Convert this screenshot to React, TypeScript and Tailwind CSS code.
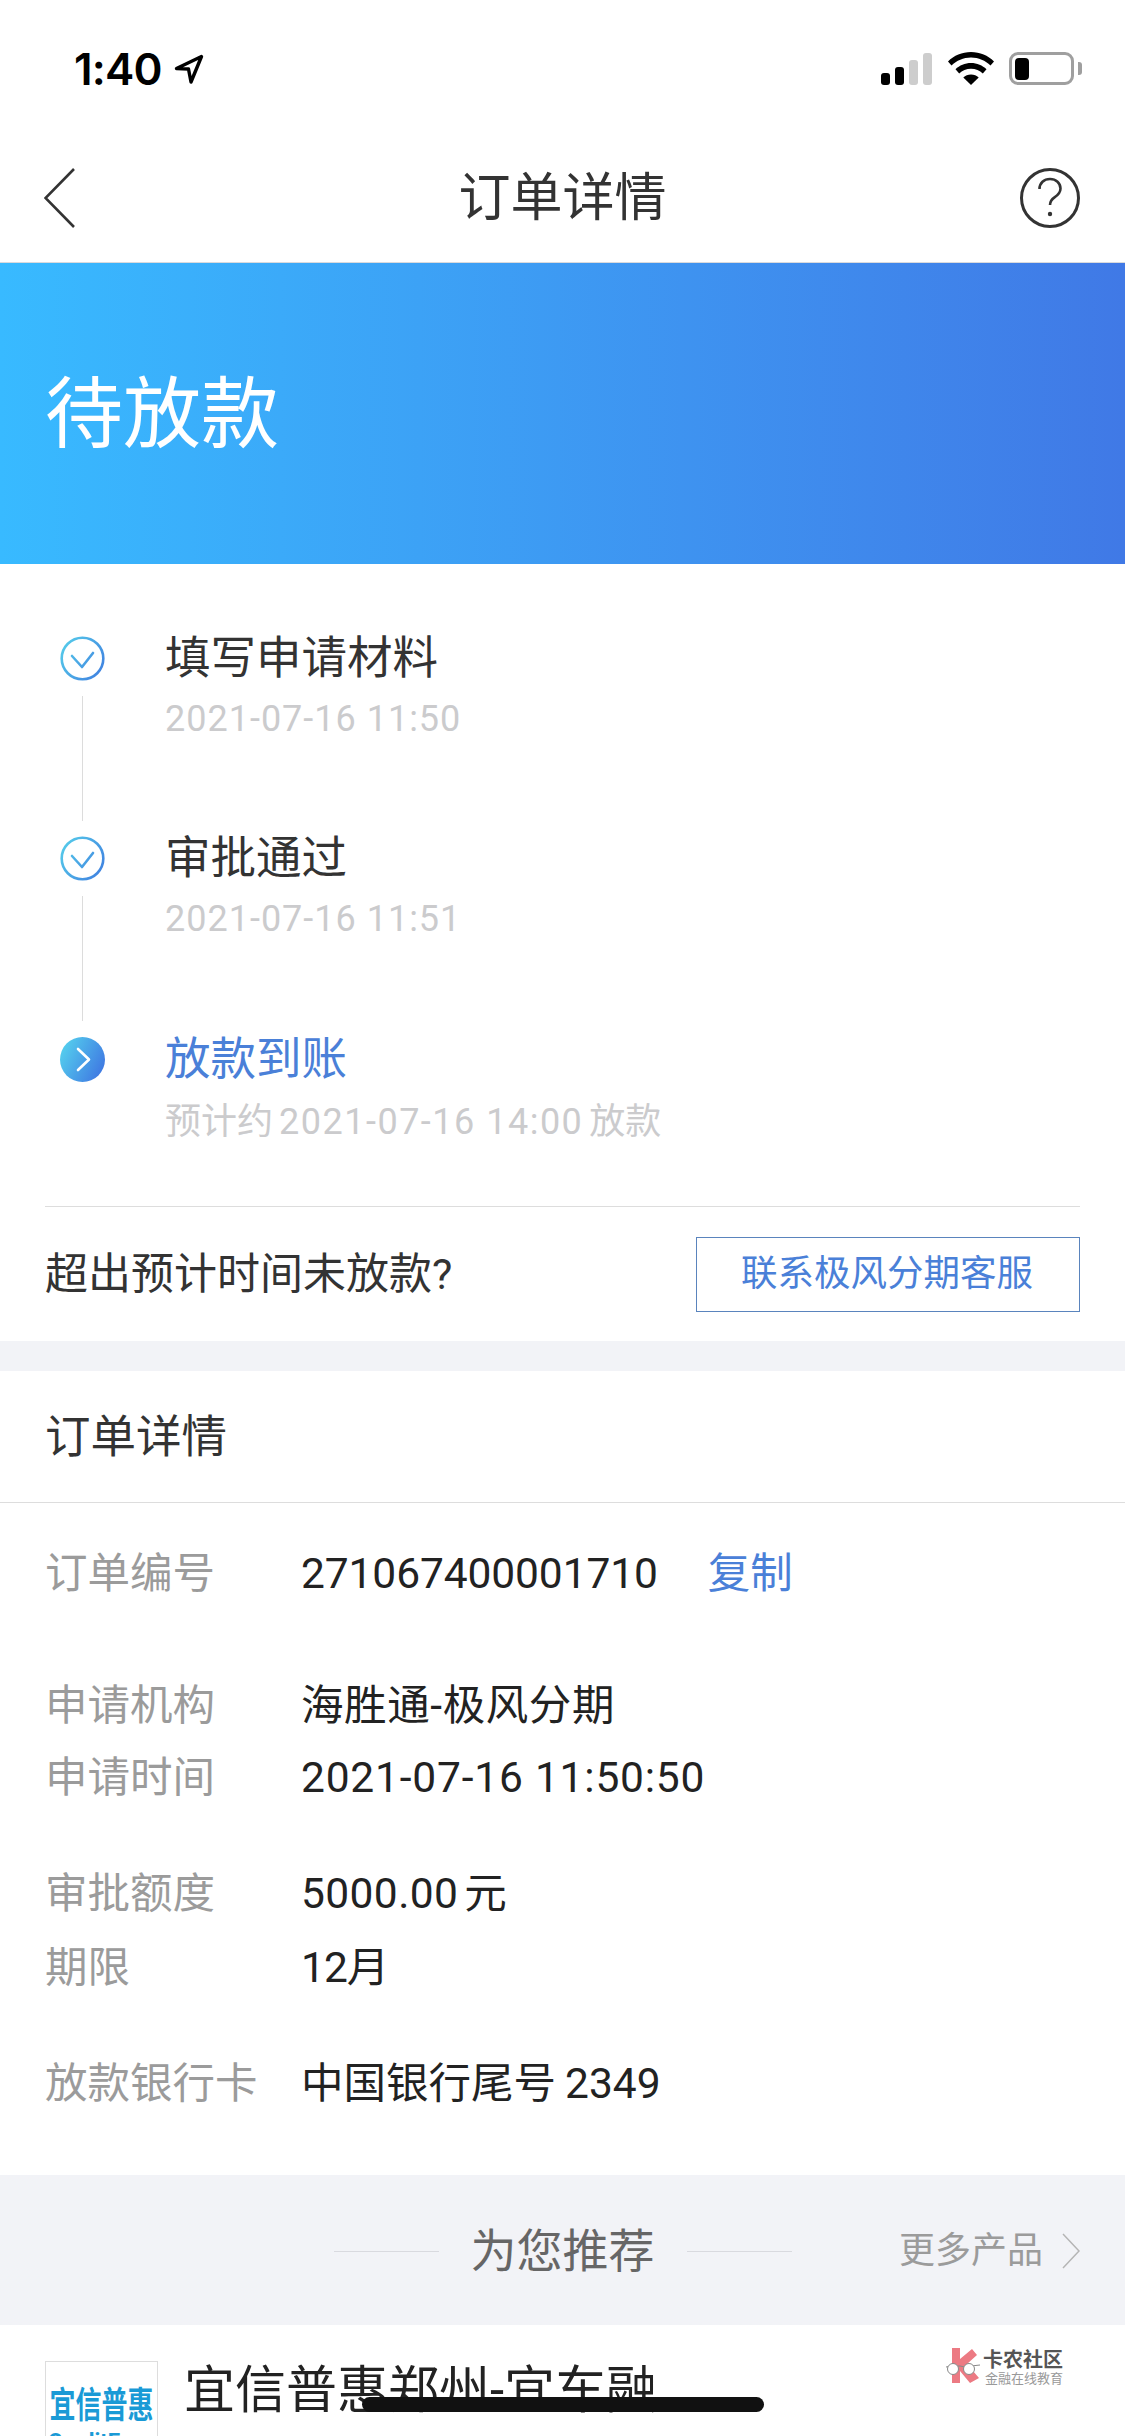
const FONT = 'font-["Roboto","Noto_Sans_CJK_SC",sans-serif]';

function CheckIcon({ id }: { id: string }) {
  return (
    <svg width="45" height="45" viewBox="0 0 45 45" fill="none">
      <defs>
        <linearGradient id={id} gradientUnits="userSpaceOnUse" x1="0" y1="8" x2="45" y2="36">
          <stop offset="0" stopColor="#56cdea" />
          <stop offset="1" stopColor="#3f80e0" />
        </linearGradient>
      </defs>
      <circle cx="22.5" cy="22.5" r="20.8" stroke={`url(#${id})`} strokeWidth="2.6" />
      <path d="M12 20l10 11 11-14" stroke={`url(#${id})`} strokeWidth="2.6" strokeLinecap="round" strokeLinejoin="round" />
    </svg>
  );
}

function ArrowIcon() {
  return (
    <svg width="45" height="45" viewBox="0 0 45 45" fill="none">
      <defs>
        <linearGradient id="arr" x1="0" y1="0.2" x2="1" y2="0.7">
          <stop offset="0" stopColor="#55d2ee" />
          <stop offset="1" stopColor="#3f78e2" />
        </linearGradient>
      </defs>
      <circle cx="22.5" cy="22.5" r="22.5" fill="url(#arr)" />
      <path d="M18 12l11 10.5L18 33" stroke="#fff" strokeWidth="2.6" strokeLinecap="round" strokeLinejoin="round" />
    </svg>
  );
}

function StatusBar() {
  return (
    <div className="flex h-[130px] items-start justify-between pt-[52px] pl-[74px] pr-[51px]">
      <div className="flex items-center gap-[12px]">
        <span className="font-['Inter',sans-serif] text-[44px] leading-[34px] font-semibold tracking-[-0.8px] text-black">1:40</span>
        <svg width="30" height="31" viewBox="0 0 30 31" fill="none">
          <path d="M27.500 2.500L2.500 14.500l12 .5L17 28z" stroke="#000" strokeWidth="3.400" strokeLinejoin="round" />
        </svg>
      </div>
      <div className="flex items-center">
        <svg width="52" height="33" viewBox="0 0 52 33" className="mr-[15px]">
          <rect x="0" y="21" width="9" height="12" rx="3" fill="#000" />
          <rect x="14" y="15" width="9" height="18" rx="3" fill="#000" />
          <rect x="28" y="8" width="9" height="25" rx="3" fill="#cdcdcd" />
          <rect x="42" y="1" width="9" height="32" rx="3" fill="#cdcdcd" />
        </svg>
        <svg width="46" height="33" viewBox="0 0 46 33" className="mr-[15px]">
          <path d="M23 0C14 0 6 3.500 0 9.500l3.500 4C8.500 8.500 15.500 5.500 23 5.500s14.500 3 19.500 8l3.500-4C40 3.500 32 0 23 0z" fill="#000" />
          <path d="M23 11c-6 0-11.500 2.400-15.500 6.200l3.700 4.200C14.200 18.500 18.500 16.800 23 16.800s8.800 1.700 11.800 4.600l3.700-4.200C34.500 13.400 29 11 23 11z" fill="#000" />
          <path d="M23 22.500c-3 0-5.700 1.100-7.700 3L23 33l7.700-7.500c-2-1.900-4.700-3-7.700-3z" fill="#000" />
        </svg>
        <div className="relative flex h-[33px] w-[65px] items-center rounded-[9px] border-[3px] border-[#9f9f9f] pl-[3px]">
          <div className="h-[22px] w-[14px] rounded-[4px] bg-black" />
          <div className="absolute top-[7px] right-[-11px] h-[13px] w-[4px] rounded-r-[3px] bg-[#9f9f9f]" />
        </div>
      </div>
    </div>
  );
}

function NavBar() {
  return (
    <div className="relative flex h-[133px] items-center justify-center border-b border-[#d9dadd] pt-[6px]">
      <svg width="31" height="60" viewBox="0 0 31 60" fill="none" className="absolute top-[38px] left-[44px]">
        <path d="M30 1L1.500 30 30 59" stroke="#333" strokeWidth="2.600" />
      </svg>
      <span className="text-[52px] leading-[60px] text-[#333]">订单详情</span>
      <div className="absolute top-[38px] right-[45px] flex h-[60px] w-[60px] items-center justify-center rounded-full border-[3px] border-[#333]">
        <svg width="26" height="42" viewBox="0 0 26 42" fill="none">
          <path d="M2.500 12C2.500 6 7 2 13 2s10.500 4 10.500 9.500c0 4.500-3 6.800-6 8.800-3 2-4.500 3.700-4.500 7.700" stroke="#333" strokeWidth="2.600" />
          <circle cx="13" cy="37" r="2.200" fill="#333" />
        </svg>
      </div>
    </div>
  );
}

function Step({
  id,
  title,
  date,
  active,
  last,
  tall,
}: {
  id: string;
  title: string;
  date: React.ReactNode;
  active?: boolean;
  last?: boolean;
  tall?: boolean;
}) {
  return (
    <div className={`flex ${last ? 'h-[176px]' : tall ? 'h-[201px]' : 'h-[200px]'}`}>
      <div className="ml-[15px] flex w-[45px] flex-col items-center pt-[7px]">
        {active ? <ArrowIcon /> : <CheckIcon id={id} />}
        {!last && <div className="mt-[15px] h-[125px] w-[1px] bg-[#dcdcdc]" />}
      </div>
      <div className="ml-[60px]">
        <div className={`h-[60px] text-[45.500px] leading-[60px] ${active ? 'text-[#4a80d8]' : 'text-[#333]'}`}>{title}</div>
        <div className={`${last ? 'mt-[12px]' : 'mt-[10px]'} h-[40px] text-[36px] leading-[40px] whitespace-nowrap text-[#cbcbcd]`}>{date}</div>
      </div>
    </div>
  );
}

function Row({ label, value, className }: { label: string; value: React.ReactNode; className?: string }) {
  return (
    <div className={`flex h-[72px] items-center pl-[45px] ${className ?? ''}`}>
      <span className="w-[256px] text-[42.500px] text-[#9b9b9b]">{label}</span>
      <span className="flex items-center text-[42.500px] text-[#222]">{value}</span>
    </div>
  );
}

export default function App() {
  return (
    <div className={`relative h-[2436px] w-[1125px] overflow-hidden bg-white ${FONT}`}>
      <StatusBar />
      <NavBar />

      <div className="flex h-[301px] items-center bg-gradient-to-r from-[#38baff] to-[#4079e6] pt-[4px] pl-[45px]">
        <span className="text-[78px] leading-none text-white">待放款</span>
      </div>

      <section className="px-[45px] pt-[65px]">
        <Step id="chk1" title="填写申请材料" date={<span className="tracking-[1px]">2021-07-16 11:50</span>} />
        <Step id="chk2" title="审批通过" date={<span className="tracking-[1px]">2021-07-16 11:51</span>} tall />
        <Step
          id="chk3"
          title="放款到账"
          date={
            <>
              预计约<span className="mx-[6px] tracking-[1.500px]">2021-07-16 14:00</span>放款
            </>
          }
          active
          last
        />
        <div className="flex h-[135px] items-center justify-between border-t border-[#dddddd]">
          <span className="text-[43px] text-[#333]">超出预计时间未放款?</span>
          <div className="flex h-[75px] w-[384px] items-center justify-center border border-[#5a84bd] pr-[2px] text-[36.500px] text-[#4a80d8]">
            联系极风分期客服
          </div>
        </div>
      </section>

      <div className="h-[30px] bg-[#f2f3f7]" />

      <div className="flex h-[132px] items-center border-b border-[#dddddd] pt-[4px] pl-[45px] text-[45.500px] text-[#333]">订单详情</div>

      <section className="pt-[35px] pb-[55px]">
        <Row
          label="订单编号"
          value={
            <>
              <span className="tracking-[-0.1px]">271067400001710</span>
              <span className="ml-[50px] text-[#4a80d8]">复制</span>
            </>
          }
        />
        <Row label="申请机构" value={<span className="tracking-[0.6px]">海胜通-极风分期</span>} className="mt-[60px]" />
        <Row label="申请时间" value={<span className="tracking-[0.8px]">2021-07-16 11:50:50</span>} />
        <Row
          label="审批额度"
          value={
            <>
              <span className="tracking-[0.4px]">5000.00</span>
              <span className="ml-[6px]">元</span>
            </>
          }
          className="mt-[44px]"
        />
        <Row label="期限" value={<span className="tracking-[-1px]">12月</span>} className="h-[73px] pt-[2px]" />
        <Row
          label="放款银行卡"
          value={
            <>
              中国银行尾号<span className="ml-[9px]">2349</span>
            </>
          }
          className="mt-[45px]"
        />
      </section>

      <div className="relative flex h-[150px] items-center justify-center bg-[#f2f3f7] pt-[2px]">
        <div className="h-[1px] w-[105px] bg-[#d9dadf]" />
        <span className="mx-[32px] text-[46px] text-[#666]">为您推荐</span>
        <div className="h-[1px] w-[105px] bg-[#d9dadf]" />
        <div className="absolute right-[45px] flex items-center gap-[19px] text-[36px] text-[#9b9b9b]">
          更多产品
          <svg width="18" height="36" viewBox="0 0 18 36" fill="none">
            <path d="M1 1l16 17L1 35" stroke="#b5b5b5" strokeWidth="1.500" />
          </svg>
        </div>
      </div>

      <div className="flex items-start pt-[36px] pl-[45px]">
        <div className="h-[120px] w-[113px] shrink-0 overflow-hidden border border-[#dddddd] pt-[25px] text-center">
          <div className="origin-top scale-y-[1.4] text-[26px] leading-[27px] font-bold whitespace-nowrap text-[#1a9ad6]">宜信普惠</div>
          <div className="mt-[16px] text-[22px] leading-[24px] font-bold whitespace-nowrap text-[#1a9ad6]">CreditEase</div>
        </div>
        <span className="ml-[26px] text-[51px] leading-[60px] text-[#222]">宜信普惠郑州-宜车融</span>
      </div>

      <div className="absolute top-[2348px] left-[945px] flex items-start gap-[2px]">
        <svg width="36" height="35" viewBox="0 0 36 35">
          <path d="M7 0h8v11L27 1l5 6-10 9 12 14-9 5-10-12v12H7z" fill="#ec7a83" />
          <path d="M1 19l6-1h8l5 1 6-1 9-1" fill="none" stroke="#888" strokeWidth="1" />
          <circle cx="8" cy="21" r="5.500" fill="#fff" stroke="#888" strokeWidth="1" />
          <circle cx="24" cy="21" r="5.500" fill="#fff" stroke="#888" strokeWidth="1" />
        </svg>
        <div className="flex flex-col pt-[2px]">
          <span className="text-[20px] leading-[20px] font-bold whitespace-nowrap text-[#555]">卡农社区</span>
          <span className="mt-[2px] ml-[2px] text-[13px] leading-[14px] whitespace-nowrap text-[#999]">金融在线教育</span>
        </div>
      </div>

      <div className="absolute top-[2397px] left-[362px] h-[15px] w-[402px] rounded-full bg-[#111]" />
    </div>
  );
}
